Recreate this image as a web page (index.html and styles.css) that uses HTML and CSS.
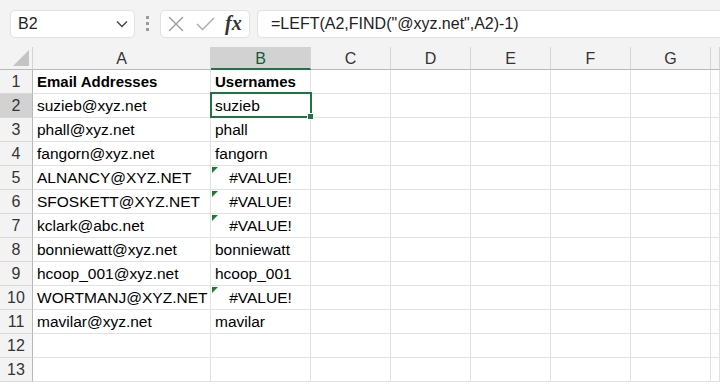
FILE: index.html
```html
<!DOCTYPE html>
<html lang="en">
<head>
<meta charset="UTF-8">
<title>Usernames</title>
<link rel="stylesheet" href="styles.css">
</head>
<body>
  <div class="toolbar">
    <div class="name-box">
      <span>B2</span>
      <svg class="chevron" width="12" height="8" viewBox="0 0 12 8"><path d="M1 1.5 L6 6.5 L11 1.5" fill="none" stroke="#444" stroke-width="1.4"/></svg>
    </div>
    <div class="grip"><i></i><i></i><i></i></div>
    <div class="buttons">
      <svg width="16" height="16" viewBox="0 0 16 16"><path d="M1 1 L15 15 M15 1 L1 15" stroke="#9a9a9a" stroke-width="1.3"/></svg>
      <svg width="19" height="14" viewBox="0 0 19 14"><path d="M1 7 L6.5 12.5 L18 1" fill="none" stroke="#a8a8a8" stroke-width="1.3"/></svg>
      <span class="fx">fx</span>
    </div>
    <div class="formula">=LEFT(A2,FIND("@xyz.net",A2)-1)</div>
  </div>

  <div class="sheet">
    <div class="corner"><svg width="16" height="16" viewBox="0 0 16 16"><path d="M16 0 L16 16 L0 16 Z" fill="#c4c4c4"/></svg></div>
    <div class="col-head">A</div>
    <div class="col-head active">B</div>
    <div class="col-head">C</div>
    <div class="col-head">D</div>
    <div class="col-head">E</div>
    <div class="col-head">F</div>
    <div class="col-head">G</div>
    <div class="col-head"></div>

    <div class="row-head">1</div>
    <div class="cell bold">Email Addresses</div>
    <div class="cell bold">Usernames</div>
    <div class="cell"></div><div class="cell"></div><div class="cell"></div><div class="cell"></div><div class="cell"></div><div class="cell"></div>

    <div class="row-head active">2</div>
    <div class="cell">suzieb@xyz.net</div>
    <div class="cell selected">suzieb</div>
    <div class="cell"></div><div class="cell"></div><div class="cell"></div><div class="cell"></div><div class="cell"></div><div class="cell"></div>

    <div class="row-head">3</div>
    <div class="cell">phall@xyz.net</div>
    <div class="cell">phall</div>
    <div class="cell"></div><div class="cell"></div><div class="cell"></div><div class="cell"></div><div class="cell"></div><div class="cell"></div>

    <div class="row-head">4</div>
    <div class="cell">fangorn@xyz.net</div>
    <div class="cell">fangorn</div>
    <div class="cell"></div><div class="cell"></div><div class="cell"></div><div class="cell"></div><div class="cell"></div><div class="cell"></div>

    <div class="row-head">5</div>
    <div class="cell">ALNANCY@XYZ.NET</div>
    <div class="cell error">#VALUE!</div>
    <div class="cell"></div><div class="cell"></div><div class="cell"></div><div class="cell"></div><div class="cell"></div><div class="cell"></div>

    <div class="row-head">6</div>
    <div class="cell">SFOSKETT@XYZ.NET</div>
    <div class="cell error">#VALUE!</div>
    <div class="cell"></div><div class="cell"></div><div class="cell"></div><div class="cell"></div><div class="cell"></div><div class="cell"></div>

    <div class="row-head">7</div>
    <div class="cell">kclark@abc.net</div>
    <div class="cell error">#VALUE!</div>
    <div class="cell"></div><div class="cell"></div><div class="cell"></div><div class="cell"></div><div class="cell"></div><div class="cell"></div>

    <div class="row-head">8</div>
    <div class="cell">bonniewatt@xyz.net</div>
    <div class="cell">bonniewatt</div>
    <div class="cell"></div><div class="cell"></div><div class="cell"></div><div class="cell"></div><div class="cell"></div><div class="cell"></div>

    <div class="row-head">9</div>
    <div class="cell">hcoop_001@xyz.net</div>
    <div class="cell">hcoop_001</div>
    <div class="cell"></div><div class="cell"></div><div class="cell"></div><div class="cell"></div><div class="cell"></div><div class="cell"></div>

    <div class="row-head">10</div>
    <div class="cell">WORTMANJ@XYZ.NET</div>
    <div class="cell error">#VALUE!</div>
    <div class="cell"></div><div class="cell"></div><div class="cell"></div><div class="cell"></div><div class="cell"></div><div class="cell"></div>

    <div class="row-head">11</div>
    <div class="cell">mavilar@xyz.net</div>
    <div class="cell">mavilar</div>
    <div class="cell"></div><div class="cell"></div><div class="cell"></div><div class="cell"></div><div class="cell"></div><div class="cell"></div>

    <div class="row-head">12</div>
    <div class="cell"></div><div class="cell"></div>
    <div class="cell"></div><div class="cell"></div><div class="cell"></div><div class="cell"></div><div class="cell"></div><div class="cell"></div>

    <div class="row-head">13</div>
    <div class="cell"></div><div class="cell"></div>
    <div class="cell"></div><div class="cell"></div><div class="cell"></div><div class="cell"></div><div class="cell"></div><div class="cell"></div>
  </div>
</body>
</html>
```

FILE: styles.css
```css
body {
  margin: 0;
  width: 720px;
  height: 385px;
  overflow: hidden;
  font-family: "Liberation Sans", Arial, sans-serif;
  background-color: #ffffff;
  color: #000;
}

/* formula bar strip */
.toolbar {
  display: flex;
  align-items: center;
  height: 47px;
  padding: 0 0 0 10px;
  background-color: #f3f3f3;
  box-sizing: border-box;
}
.name-box {
  display: flex;
  align-items: center;
  justify-content: space-between;
  width: 125px;
  height: 28px;
  padding: 0 6px 0 7px;
  box-sizing: border-box;
  background-color: #fff;
  border: 1px solid #e2e2e2;
  border-radius: 5px;
  font-size: 16px;
  color: #222;
}
.grip {
  display: flex;
  flex-direction: column;
  gap: 3px;
  margin: 0 11px 0 11px;
}
.grip i {
  width: 3px;
  height: 3px;
  background-color: #9a9a9a;
}
.buttons {
  display: flex;
  align-items: center;
  gap: 12px;
  width: 90px;
  height: 28px;
  padding: 0 0 0 7px;
  box-sizing: border-box;
  background-color: #fff;
  border: 1px solid #e2e2e2;
  border-radius: 5px;
}
.fx {
  font-family: "Liberation Serif", "DejaVu Serif", serif;
  font-style: italic;
  font-weight: bold;
  font-size: 20px;
  color: #333;
  margin-left: -2px;
}
.formula {
  flex: 1;
  height: 28px;
  margin-left: 7px;
  padding-left: 13px;
  box-sizing: border-box;
  line-height: 26px;
  background-color: #fff;
  border: 1px solid #e2e2e2;
  border-right: none;
  border-radius: 5px 0 0 5px;
  font-size: 16px;
  color: #222;
}

/* grid */
.sheet {
  display: grid;
  grid-template-columns: 33px 178px 100px repeat(5, 80px) 1fr;
  grid-template-rows: 23px;
  grid-auto-rows: 24px;
  font-size: 15.5px;
  height: 338px;
  overflow: hidden;
}
.sheet > div {
  box-sizing: border-box;
  border-right: 1px solid #e1e1e1;
  border-bottom: 1px solid #e1e1e1;
  white-space: nowrap;
}
.corner {
  display: flex;
  align-items: flex-end;
  justify-content: flex-end;
  padding: 0 3px 3px 0;
  background-color: #f3f3f3;
}
.sheet > .corner,
.sheet > .col-head {
  border-right: 1px solid #d4d4d4;
  border-bottom: 1px solid #b8b8b8;
}
.col-head {
  background-color: #f3f3f3;
  color: #333;
  text-align: center;
  line-height: 23px;
  font-size: 16px;
}
.col-head.active {
  background-color: #d2d2d2;
  color: #185c37;
}
.sheet > .col-head.active {
  border-bottom: 2px solid #217346;
}
.sheet > .row-head {
  border-right: 1px solid #b8b8b8;
  border-bottom: 1px solid #d8d8d8;
  background-color: #f3f3f3;
  color: #333;
  text-align: center;
  line-height: 24px;
  font-size: 16px;
}
.row-head.active {
  background-color: #d2d2d2;
}
.cell {
  padding-left: 4px;
  line-height: 24px;
  position: relative;
}
.cell.bold {
  font-weight: bold;
  font-size: 15px;
}
.cell.error {
  text-align: center;
  padding-left: 0;
}
.cell.error::before {
  content: "";
  position: absolute;
  left: 1px;
  top: 1px;
  border-top: 6px solid #1e7b34;
  border-right: 6px solid transparent;
}
.cell.selected::after {
  content: "";
  position: absolute;
  left: -1px;
  top: -2px;
  right: -2px;
  bottom: -1px;
  border: 2px solid #217346;
}
.cell.selected::before {
  content: "";
  position: absolute;
  right: -4px;
  bottom: -3px;
  width: 5px;
  height: 5px;
  background-color: #217346;
  border: 1px solid #fff;
  z-index: 2;
}
```
